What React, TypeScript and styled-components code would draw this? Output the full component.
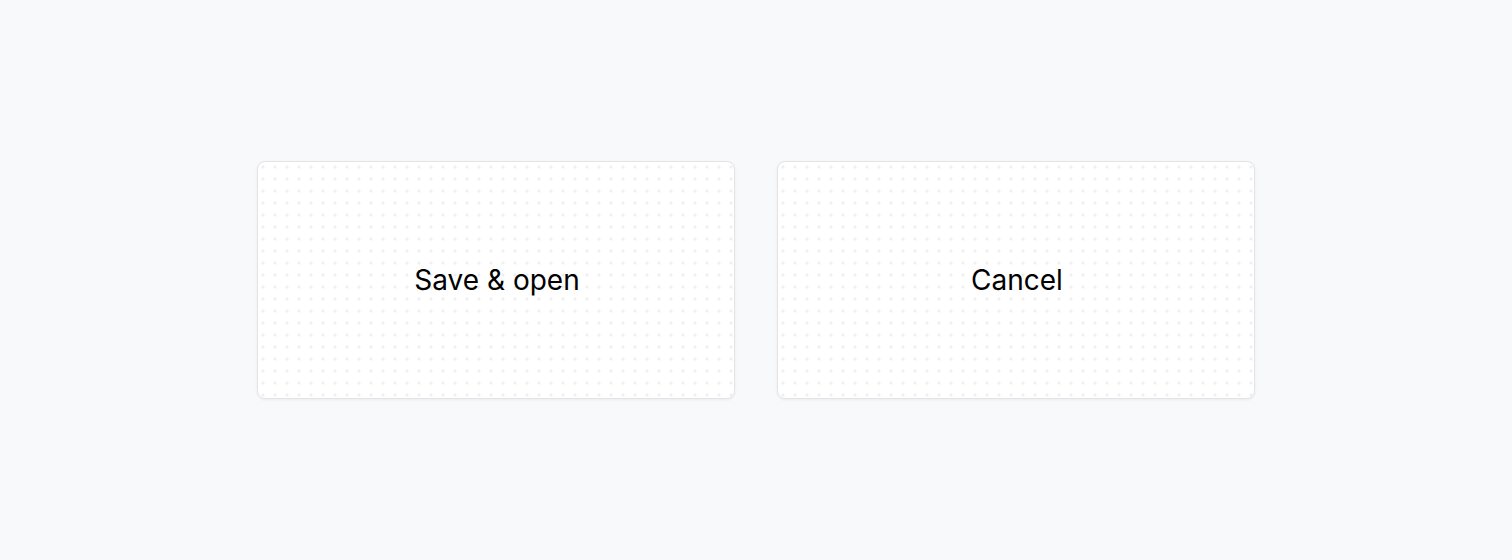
import React from 'react'
import styled, { createGlobalStyle } from 'styled-components'

const GlobalStyle = createGlobalStyle`
  html, body {
    margin: 0;
    padding: 0;
    background: #f8f9fb;
    font-family: Inter, "Liberation Sans", sans-serif;
  }
`

const Page = styled.div`
  height: 560px;
  display: flex;
  align-items: center;
  justify-content: center;
  gap: 42px;
`

const Card = styled.button`
  width: 478px;
  height: 238px;
  box-sizing: border-box;
  border: 1px solid #e3e4e7;
  border-radius: 8px;
  background-color: #ffffff;
  background-image: radial-gradient(circle at 5px 5px, #efeff1 1.2px, transparent 1.9px);
  background-size: 12px 12px;
  background-position: 0 0;
  box-shadow: 0 1px 3px rgba(16, 24, 40, 0.06);
  display: flex;
  align-items: center;
  justify-content: center;
  font-family: Inter, "Liberation Sans", sans-serif;
  font-size: 28px;
  font-weight: 400;
  color: #000000;
  cursor: pointer;
  padding: 0 0 0 2px;
`

export default function App() {
  return (
    <>
      <GlobalStyle />
      <Page>
        <Card>Save &amp; open</Card>
        <Card>Cancel</Card>
      </Page>
    </>
  )
}
